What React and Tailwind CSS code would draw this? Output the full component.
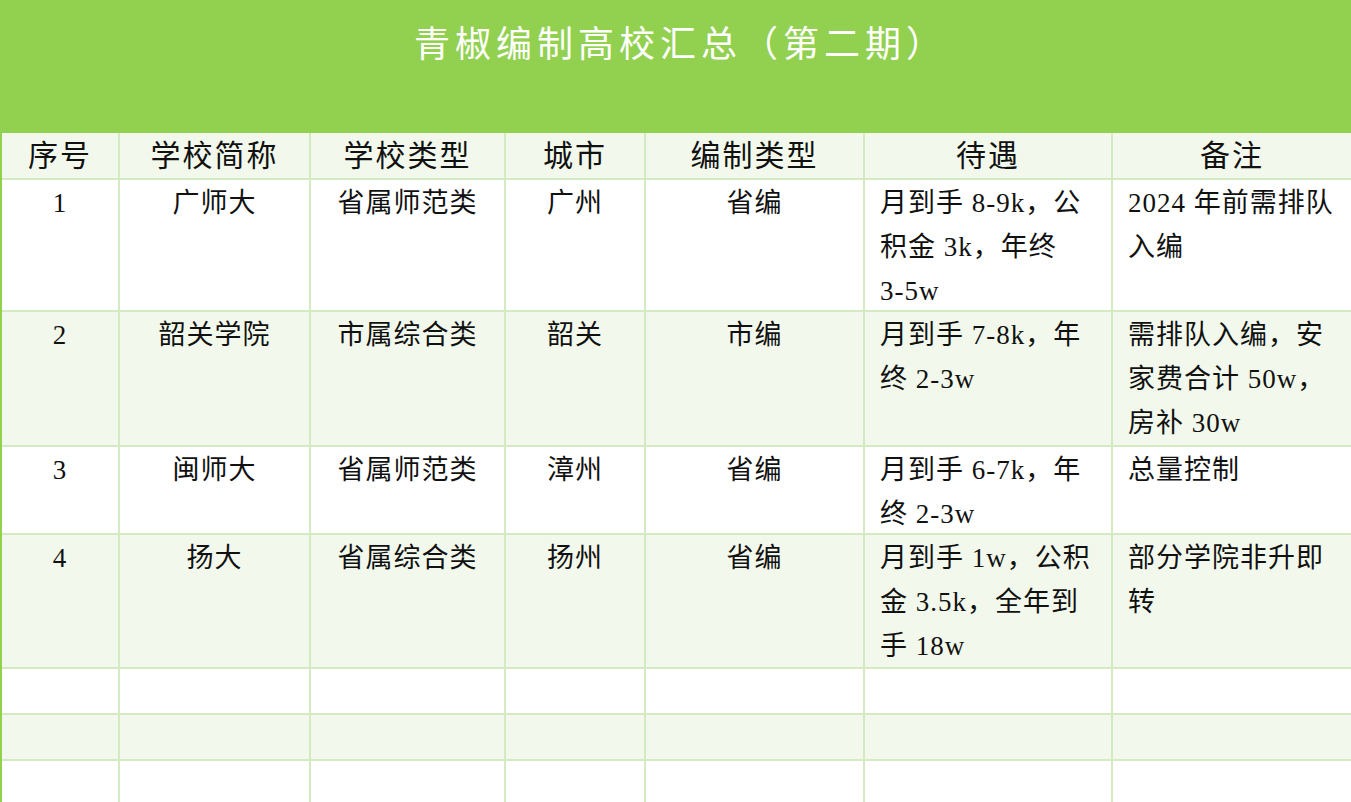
import React from "react";

const headers = ["序号", "学校简称", "学校类型", "城市", "编制类型", "待遇", "备注"];

const rows = [
  {
    no: "1",
    name: "广师大",
    type: "省属师范类",
    city: "广州",
    staff: "省编",
    pay: ["月到手 8-9k，公", "积金 3k，年终", "3-5w"],
    note: ["2024 年前需排队", "入编"],
  },
  {
    no: "2",
    name: "韶关学院",
    type: "市属综合类",
    city: "韶关",
    staff: "市编",
    pay: ["月到手 7-8k，年", "终 2-3w"],
    note: ["需排队入编，安", "家费合计 50w，", "房补 30w"],
  },
  {
    no: "3",
    name: "闽师大",
    type: "省属师范类",
    city: "漳州",
    staff: "省编",
    pay: ["月到手 6-7k，年", "终 2-3w"],
    note: ["总量控制"],
  },
  {
    no: "4",
    name: "扬大",
    type: "省属综合类",
    city: "扬州",
    staff: "省编",
    pay: ["月到手 1w，公积", "金 3.5k，全年到", "手 18w"],
    note: ["部分学院非升即", "转"],
  },
];

const Lines = ({ lines }) => (
  <>
    {lines.map((l, i) => (
      <span key={i} className="block whitespace-nowrap">
        {l}
      </span>
    ))}
  </>
);

export default function App() {
  return (
    <div className="w-[1351px] h-[802px] overflow-hidden bg-white text-[#111] font-['Liberation_Serif','Noto_Sans_CJK_SC',serif]">
      {/* Title band */}
      <div className="h-[133px] bg-[#92d050] pt-[22px] pl-[10px]">
        <h1 className="text-center text-white text-[36px] leading-[46px] tracking-[5px] font-normal">
          青椒编制高校汇总（第二期）
        </h1>
      </div>

      {/* Table grid */}
      <div className="grid grid-cols-[116px_189px_193px_138px_217px_246px_1fr] grid-rows-[45px_130px_133px_86px_132px_44px_44px_44px] gap-[2px] bg-[#d4eac2] border-l-2 border-[#92d050]">
        {headers.map((h) => (
          <div
            key={h}
            className="bg-[#f2f9ec] flex items-center justify-center text-[30px] leading-none tracking-[2px]"
          >
            {h}
          </div>
        ))}

        {rows.map((r, idx) => {
          const bg = idx % 2 === 0 ? "bg-white" : "bg-[#f2f9ec]";
          const cell = `${bg} text-[27px] leading-[44px] tracking-[1px] pt-[1px]`;
          return (
            <React.Fragment key={r.no}>
              <div className={`${cell} text-center`}>{r.no}</div>
              <div className={`${cell} text-center`}>{r.name}</div>
              <div className={`${cell} text-center`}>{r.type}</div>
              <div className={`${cell} text-center`}>{r.city}</div>
              <div className={`${cell} text-center`}>{r.staff}</div>
              <div className={`${cell} pl-[15px]`}>
                <Lines lines={r.pay} />
              </div>
              <div className={`${cell} pl-[15px]`}>
                <Lines lines={r.note} />
              </div>
            </React.Fragment>
          );
        })}

        {[0, 1, 2].map((e) =>
          [0, 1, 2, 3, 4, 5, 6].map((c) => (
            <div
              key={`${e}-${c}`}
              className={e === 1 ? "bg-[#f2f9ec]" : "bg-white"}
            />
          ))
        )}
      </div>
    </div>
  );
}
